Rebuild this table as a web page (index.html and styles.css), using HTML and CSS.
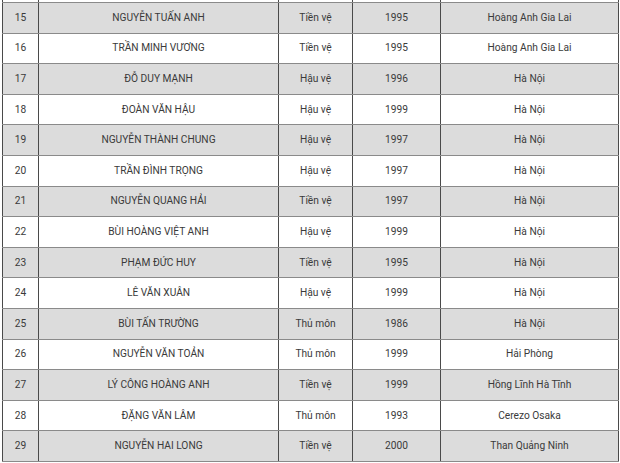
FILE: index.html
```html
<!DOCTYPE html>
<html lang="vi">
<head>
<meta charset="utf-8">
<link rel="stylesheet" href="styles.css">
</head>
<body>
<table class="roster">
  <colgroup>
    <col class="c-no"><col class="c-name"><col class="c-pos"><col class="c-year"><col class="c-club">
  </colgroup>
  <tbody>
    <tr class="edge"><td></td><td></td><td></td><td></td><td></td></tr>
    <tr class="alt"><td>15</td><td>NGUYỄN TUẤN ANH</td><td>Tiền vệ</td><td>1995</td><td>Hoàng Anh Gia Lai</td></tr>
    <tr><td>16</td><td>TRẦN MINH VƯƠNG</td><td>Tiền vệ</td><td>1995</td><td>Hoàng Anh Gia Lai</td></tr>
    <tr class="alt"><td>17</td><td>ĐỖ DUY MẠNH</td><td>Hậu vệ</td><td>1996</td><td>Hà Nội</td></tr>
    <tr><td>18</td><td>ĐOÀN VĂN HẬU</td><td>Hậu vệ</td><td>1999</td><td>Hà Nội</td></tr>
    <tr class="alt"><td>19</td><td>NGUYỄN THÀNH CHUNG</td><td>Hậu vệ</td><td>1997</td><td>Hà Nội</td></tr>
    <tr><td>20</td><td>TRẦN ĐÌNH TRỌNG</td><td>Hậu vệ</td><td>1997</td><td>Hà Nội</td></tr>
    <tr class="alt"><td>21</td><td>NGUYỄN QUANG HẢI</td><td>Tiền vệ</td><td>1997</td><td>Hà Nội</td></tr>
    <tr><td>22</td><td>BÙI HOÀNG VIỆT ANH</td><td>Hậu vệ</td><td>1999</td><td>Hà Nội</td></tr>
    <tr class="alt"><td>23</td><td>PHẠM ĐỨC HUY</td><td>Tiền vệ</td><td>1995</td><td>Hà Nội</td></tr>
    <tr><td>24</td><td>LÊ VĂN XUÂN</td><td>Hậu vệ</td><td>1999</td><td>Hà Nội</td></tr>
    <tr class="alt"><td>25</td><td>BÙI TẤN TRƯỜNG</td><td>Thủ môn</td><td>1986</td><td>Hà Nội</td></tr>
    <tr><td>26</td><td>NGUYỄN VĂN TOẢN</td><td>Thủ môn</td><td>1999</td><td>Hải Phòng</td></tr>
    <tr class="alt"><td>27</td><td>LÝ CÔNG HOÀNG ANH</td><td>Tiền vệ</td><td>1999</td><td>Hồng Lĩnh Hà Tĩnh</td></tr>
    <tr><td>28</td><td>ĐẶNG VĂN LÂM</td><td>Thủ môn</td><td>1993</td><td>Cerezo Osaka</td></tr>
    <tr class="alt"><td>29</td><td>NGUYỄN HAI LONG</td><td>Tiền vệ</td><td>2000</td><td>Than Quảng Ninh</td></tr>
  </tbody>
</table>
</body>
</html>
```
FILE: styles.css
```css
html, body {
  margin: 0;
  padding: 0;
  background: #ffffff;
}
body {
  font-family: Roboto, "Liberation Sans", Arial, sans-serif;
  font-size: 10.2px;
  color: #3a3a3a;
}
.roster {
  border-collapse: collapse;
  table-layout: fixed;
  width: 616px;
  margin-left: 2px;
}
.c-no { width: 36px; }
.c-name { width: 240px; }
.c-pos { width: 74px; }
.c-year { width: 88px; }
.c-club { width: 178px; }
.roster td {
  border-top: 1px solid #8a8a8a;
  border-bottom: 1px solid #8a8a8a;
  border-left: 1px solid #4a4a4a;
  border-right: 1px solid #4a4a4a;
  text-align: center;
  vertical-align: middle;
  height: 29.6px;
  padding: 0;
  line-height: 14px;
}
.roster .edge td {
  height: 2px;
  border-top: none;
}
.roster .alt td {
  background: #dcdcdc;
}
```
